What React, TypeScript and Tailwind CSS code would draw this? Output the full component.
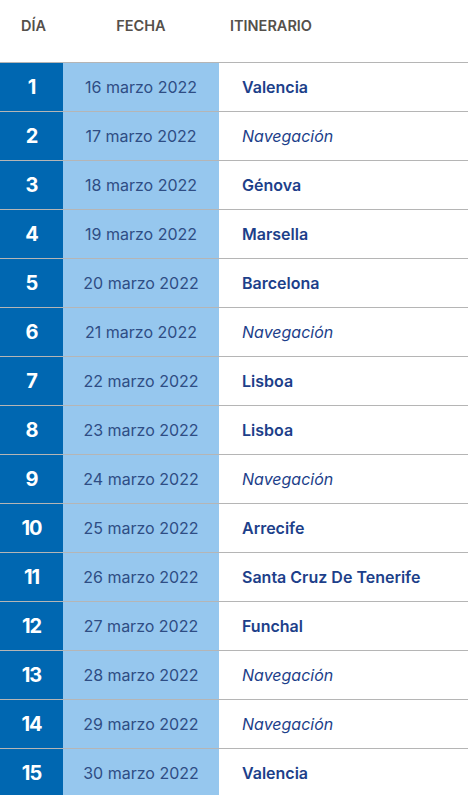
import React from "react";

const rows: [number, string, string, boolean][] = [
  [1, "16 marzo 2022", "Valencia", false],
  [2, "17 marzo 2022", "Navegación", true],
  [3, "18 marzo 2022", "Génova", false],
  [4, "19 marzo 2022", "Marsella", false],
  [5, "20 marzo 2022", "Barcelona", false],
  [6, "21 marzo 2022", "Navegación", true],
  [7, "22 marzo 2022", "Lisboa", false],
  [8, "23 marzo 2022", "Lisboa", false],
  [9, "24 marzo 2022", "Navegación", true],
  [10, "25 marzo 2022", "Arrecife", false],
  [11, "26 marzo 2022", "Santa Cruz De Tenerife", false],
  [12, "27 marzo 2022", "Funchal", false],
  [13, "28 marzo 2022", "Navegación", true],
  [14, "29 marzo 2022", "Navegación", true],
  [15, "30 marzo 2022", "Valencia", false],
];

export default function App() {
  return (
    <div className="w-[468px] h-[795px] overflow-hidden bg-white" style={{ fontFamily: "Inter, 'Open Sans', sans-serif" }}>
      <div className="flex h-[62px] items-center pb-[10px] text-[14.5px] font-semibold text-[#55504b]">
        <div className="w-[63px] pl-[21px]">DÍA</div>
        <div className="w-[156px] text-center">FECHA</div>
        <div className="pl-[11px]">ITINERARIO</div>
      </div>
      {rows.map(([d, date, place, nav]) => (
        <div key={d} className="flex h-[49px] border-t border-[#b5b5b5]">
          <div className="w-[63px] bg-[#0067b1] flex items-center justify-center text-white font-bold text-[20px] tracking-[-1px]">
            {d}
          </div>
          <div className="w-[156px] bg-[#96c7ee] flex items-center justify-center text-[16px] text-[#2e4d84]">
            {date}
          </div>
          <div
            className={
              "flex-1 flex items-center pl-[23px] text-[16px] text-[#1d3f8a] " +
              (nav ? "italic font-normal" : "font-semibold")
            }
          >
            {place}
          </div>
        </div>
      ))}
    </div>
  );
}
